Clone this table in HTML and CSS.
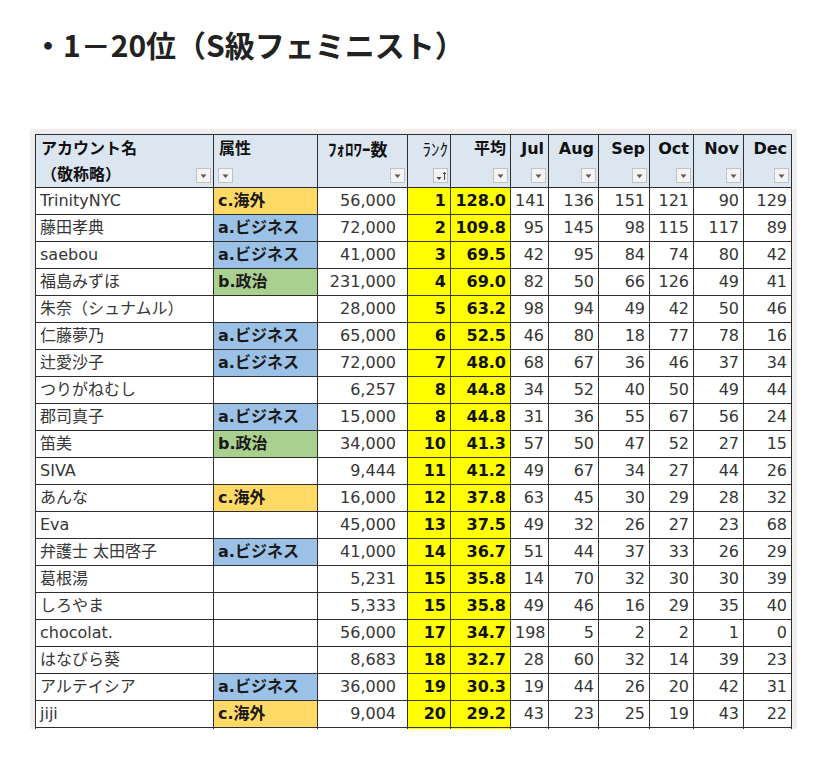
FILE: index.html
```html
<!DOCTYPE html>
<html lang="ja">
<head>
<meta charset="utf-8">
<title>1－20位（S級フェミニスト）</title>
<link rel="stylesheet" href="styles.css">
</head>
<body>
<h1 class="title">・1－20位（S級フェミニスト）</h1>
<div class="shot">
<table class="sheet">
<colgroup>
<col class="w-name"><col class="w-attr"><col class="w-fol"><col class="w-rank"><col class="w-avg">
<col class="w-jul"><col class="w-aug"><col class="w-sep"><col class="w-oct"><col class="w-nov"><col class="w-dec">
</colgroup>
<thead>
<tr>
<th><div class="hd left"><span class="lbl">アカウント名</span><div class="row2"><span class="sub">（敬称略）</span><span class="flt"></span></div></div></th>
<th><div class="hd left"><span class="lbl">属性</span><div class="row2"><span class="flt"></span></div></div></th>
<th><div class="hd left"><span class="lbl hw fol-l">ﾌｫﾛﾜｰ数</span><div class="row2 end"><span class="flt"></span></div></div></th>
<th><div class="hd"><span class="lbl hw thin">ﾗﾝｸ</span><div class="row2"><span class="flt sort"><svg viewBox="0 0 14 14" width="14" height="14"><path d="M2.5 8h5l-2.5 3z" fill="#444"/><path d="M10.5 3.5v7.5M9 5l1.5-1.5 1.5 1.5" stroke="#444" stroke-width="1" fill="none"/></svg></span></div></div></th>
<th><div class="hd"><span class="lbl">平均</span><div class="row2"><span class="flt"></span></div></div></th>
<th><div class="hd"><span class="lbl">Jul</span><div class="row2"><span class="flt"></span></div></div></th>
<th><div class="hd"><span class="lbl">Aug</span><div class="row2"><span class="flt"></span></div></div></th>
<th><div class="hd"><span class="lbl">Sep</span><div class="row2"><span class="flt"></span></div></div></th>
<th><div class="hd"><span class="lbl">Oct</span><div class="row2"><span class="flt"></span></div></div></th>
<th><div class="hd"><span class="lbl">Nov</span><div class="row2"><span class="flt"></span></div></div></th>
<th><div class="hd"><span class="lbl">Dec</span><div class="row2"><span class="flt"></span></div></div></th>
</tr>
</thead>
<tbody>
<tr><td>TrinityNYC</td><td class="attr c">c.海外</td><td class="fol">56,000</td><td class="rank">1</td><td class="avg">128.0</td><td>141</td><td>136</td><td>151</td><td>121</td><td>90</td><td>129</td></tr>
<tr><td>藤田孝典</td><td class="attr a">a.ビジネス</td><td class="fol">72,000</td><td class="rank">2</td><td class="avg">109.8</td><td>95</td><td>145</td><td>98</td><td>115</td><td>117</td><td>89</td></tr>
<tr><td>saebou</td><td class="attr a">a.ビジネス</td><td class="fol">41,000</td><td class="rank">3</td><td class="avg">69.5</td><td>42</td><td>95</td><td>84</td><td>74</td><td>80</td><td>42</td></tr>
<tr><td>福島みずほ</td><td class="attr b">b.政治</td><td class="fol">231,000</td><td class="rank">4</td><td class="avg">69.0</td><td>82</td><td>50</td><td>66</td><td>126</td><td>49</td><td>41</td></tr>
<tr><td>朱奈（シュナムル）</td><td class="attr"></td><td class="fol">28,000</td><td class="rank">5</td><td class="avg">63.2</td><td>98</td><td>94</td><td>49</td><td>42</td><td>50</td><td>46</td></tr>
<tr><td>仁藤夢乃</td><td class="attr a">a.ビジネス</td><td class="fol">65,000</td><td class="rank">6</td><td class="avg">52.5</td><td>46</td><td>80</td><td>18</td><td>77</td><td>78</td><td>16</td></tr>
<tr><td>辻愛沙子</td><td class="attr a">a.ビジネス</td><td class="fol">72,000</td><td class="rank">7</td><td class="avg">48.0</td><td>68</td><td>67</td><td>36</td><td>46</td><td>37</td><td>34</td></tr>
<tr><td>つりがねむし</td><td class="attr"></td><td class="fol">6,257</td><td class="rank">8</td><td class="avg">44.8</td><td>34</td><td>52</td><td>40</td><td>50</td><td>49</td><td>44</td></tr>
<tr><td>郡司真子</td><td class="attr a">a.ビジネス</td><td class="fol">15,000</td><td class="rank">8</td><td class="avg">44.8</td><td>31</td><td>36</td><td>55</td><td>67</td><td>56</td><td>24</td></tr>
<tr><td>笛美</td><td class="attr b">b.政治</td><td class="fol">34,000</td><td class="rank">10</td><td class="avg">41.3</td><td>57</td><td>50</td><td>47</td><td>52</td><td>27</td><td>15</td></tr>
<tr><td>SIVA</td><td class="attr"></td><td class="fol">9,444</td><td class="rank">11</td><td class="avg">41.2</td><td>49</td><td>67</td><td>34</td><td>27</td><td>44</td><td>26</td></tr>
<tr><td>あんな</td><td class="attr c">c.海外</td><td class="fol">16,000</td><td class="rank">12</td><td class="avg">37.8</td><td>63</td><td>45</td><td>30</td><td>29</td><td>28</td><td>32</td></tr>
<tr><td>Eva</td><td class="attr"></td><td class="fol">45,000</td><td class="rank">13</td><td class="avg">37.5</td><td>49</td><td>32</td><td>26</td><td>27</td><td>23</td><td>68</td></tr>
<tr><td>弁護士 太田啓子</td><td class="attr a">a.ビジネス</td><td class="fol">41,000</td><td class="rank">14</td><td class="avg">36.7</td><td>51</td><td>44</td><td>37</td><td>33</td><td>26</td><td>29</td></tr>
<tr><td>葛根湯</td><td class="attr"></td><td class="fol">5,231</td><td class="rank">15</td><td class="avg">35.8</td><td>14</td><td>70</td><td>32</td><td>30</td><td>30</td><td>39</td></tr>
<tr><td>しろやま</td><td class="attr"></td><td class="fol">5,333</td><td class="rank">15</td><td class="avg">35.8</td><td>49</td><td>46</td><td>16</td><td>29</td><td>35</td><td>40</td></tr>
<tr><td>chocolat.</td><td class="attr"></td><td class="fol">56,000</td><td class="rank">17</td><td class="avg">34.7</td><td>198</td><td>5</td><td>2</td><td>2</td><td>1</td><td>0</td></tr>
<tr><td>はなびら葵</td><td class="attr"></td><td class="fol">8,683</td><td class="rank">18</td><td class="avg">32.7</td><td>28</td><td>60</td><td>32</td><td>14</td><td>39</td><td>23</td></tr>
<tr><td>アルテイシア</td><td class="attr a">a.ビジネス</td><td class="fol">36,000</td><td class="rank">19</td><td class="avg">30.3</td><td>19</td><td>44</td><td>26</td><td>20</td><td>42</td><td>31</td></tr>
<tr><td>jiji</td><td class="attr c">c.海外</td><td class="fol">9,004</td><td class="rank">20</td><td class="avg">29.2</td><td>43</td><td>23</td><td>25</td><td>19</td><td>43</td><td>22</td></tr>
<tr><td>&nbsp;</td><td class="attr"></td><td class="fol"></td><td class="rank"></td><td class="avg"></td><td></td><td></td><td></td><td></td><td></td><td></td></tr>
</tbody>
</table>
</div>
</body>
</html>
```
FILE: styles.css
```css
html, body {
  margin: 0;
  padding: 0;
  background: #ffffff;
}
body {
  font-family: "Noto Sans CJK JP", sans-serif;
  color: #222;
}
.title {
  margin: 0;
  padding: 26px 0 0 33px;
  font-size: 30px;
  line-height: 36px;
  font-weight: 700;
  color: #222;
}
.shot {
  margin: 67px 0 0 30px;
  width: 767px;
  height: 600px;
  box-sizing: border-box;
  padding: 5px 0 0 5px;
  background: #eeeeee;
  overflow: hidden;
}
.sheet {
  width: 756px;
  table-layout: fixed;
  border-collapse: collapse;
  font-family: "DejaVu Sans", "Noto Sans CJK JP", sans-serif;
  font-size: 16px;
  color: #363636;
  background: #fff;
}
.w-name { width: 178px; }
.w-attr { width: 104px; }
.w-fol { width: 90px; }
.w-rank { width: 43px; }
.w-avg { width: 60px; }
.w-jul { width: 38px; }
.w-aug { width: 50px; }
.w-sep { width: 51px; }
.w-oct { width: 44px; }
.w-nov { width: 50px; }
.w-dec { width: 48px; }

.sheet th {
  background: #dce6f1;
  border: 1px solid #2e2e2e;
  padding: 0;
  height: 52px;
  vertical-align: top;
  font-weight: 700;
  color: #111;
}
.hd {
  height: 52px;
  display: flex;
  flex-direction: column;
  align-items: flex-end;
  box-sizing: border-box;
  padding: 3px 2px 4px 4px;
}
.hd.left { align-items: stretch; }
.lbl {
  line-height: 22px;
  white-space: nowrap;
  padding-right: 2px;
}
.hd.left .lbl { text-align: left; padding-left: 1px; }
.lbl.hw {
  font-family: "Noto Sans CJK JP", sans-serif;
  font-size: 17px;
}
.hd.left .lbl.fol-l { padding-left: 6px; }
.lbl.thin { font-weight: 400; font-size: 17px; padding-right: 0; }
.row2 {
  margin-top: auto;
  display: flex;
  align-items: flex-end;
  justify-content: flex-end;
  width: 100%;
}
.hd.left .row2 { justify-content: space-between; }
.hd.left .row2.end { justify-content: flex-end; }
.sub {
  font-family: "Noto Sans CJK JP", sans-serif;
  line-height: 20px;
  padding-left: 1px;
}
.flt {
  width: 15px;
  height: 15px;
  box-sizing: border-box;
  border: 1px solid #c2c2c2;
  background: #f4f4f4 url("data:image/svg+xml,%3Csvg xmlns='http://www.w3.org/2000/svg' width='13' height='13'%3E%3Cpath d='M3.5 5.5h6l-3 3.5z' fill='%23555'/%3E%3C/svg%3E") no-repeat center;
  display: block;
}
.flt.sort { background-image: none; }
.flt svg { display: block; margin: -0.5px; }

.sheet td {
  border: 1px solid #2e2e2e;
  height: 26px;
  padding: 0 4px;
  text-align: right;
  white-space: nowrap;
  overflow: hidden;
  line-height: 26px;
}
.sheet td:first-child {
  text-align: left;
  padding-left: 4px;
}
.sheet td.attr {
  text-align: left;
  font-weight: 700;
  color: #1a1a1a;
  padding-left: 4px;
}
.attr.a { background: #9bc2e6; }
.attr.b { background: #a9d08e; }
.attr.c { background: #ffd966; }
.sheet td.fol { padding-right: 11px; }
.sheet td.rank,
.sheet td.avg {
  background: #ffff00;
  font-weight: 700;
  color: #111;
  border-color: #3a3a1a;
}
```
